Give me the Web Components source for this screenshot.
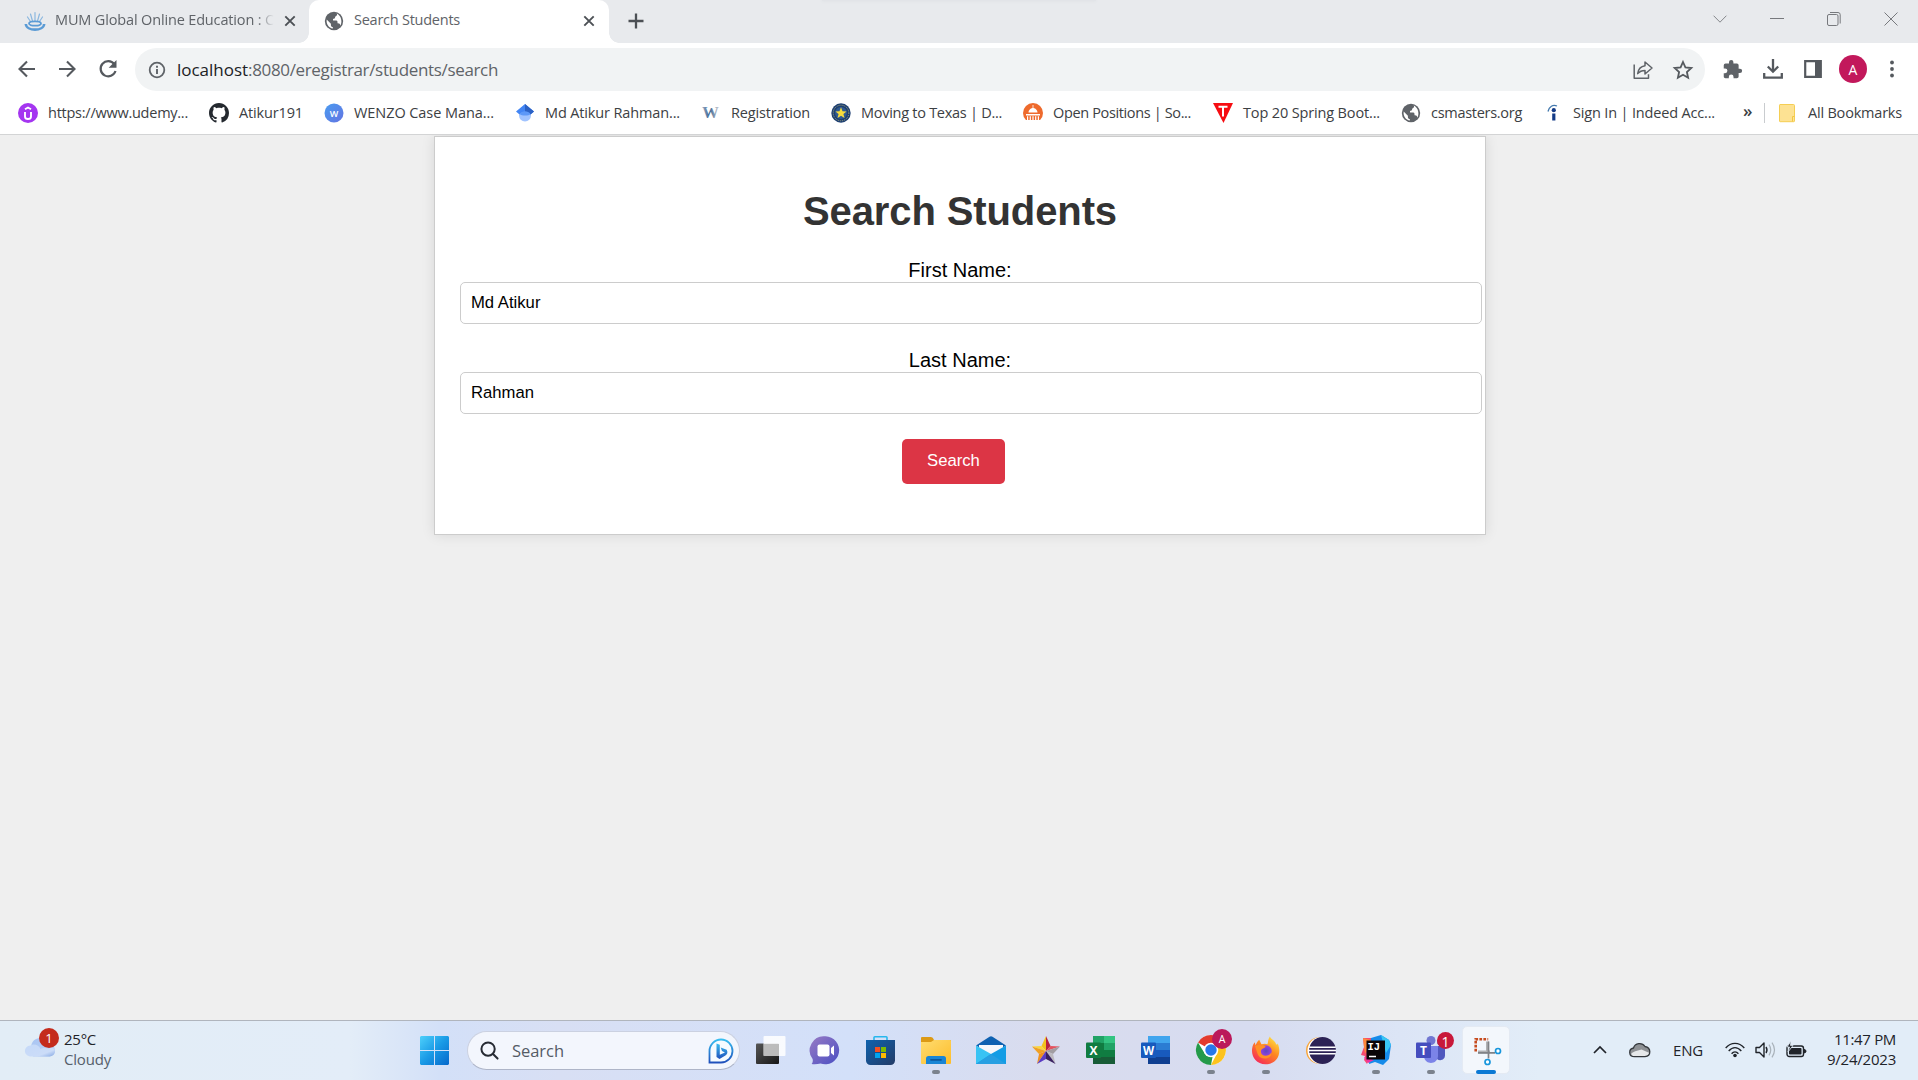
<!DOCTYPE html>
<html lang="en">
<head>
<meta charset="utf-8">
<title>Search Students</title>
<style>
html, body { margin: 0; height: 100%; overflow: hidden; }
body { font-family: "Open Sans", "Noto Sans", sans-serif; background: #efefef; }
</style>
</head>
<body>
<desktop-screen></desktop-screen>
<script>
const ICONS = {
  fountain: ['22 22', `<g fill="none" stroke="#8ab7df" stroke-width="1.2" stroke-linecap="round"><path d="M11 11V2.500M8.500 11 6.500 4M13.500 11l2-7M6.500 11.500 3.500 7M15.500 11.500l3-4.500"/></g><g fill="none" stroke="#5b9bd5"><ellipse cx="11" cy="13.500" rx="6" ry="2.200" stroke-width="1.800"/><path d="M1.800 14c.6 7.500 17.800 7.500 18.400 0" stroke-width="2.600"/></g>`],
  close: ['12 12', `<path d="M1.300 1.300l9.400 9.400m0-9.400-9.400 9.400" stroke="#4c5055" stroke-width="1.900"/>`],
  plus: ['16 16', `<path d="M8 .5v15M.5 8h15" stroke="#4c5055" stroke-width="2.300"/>`],
  globe: ['20 20', `<circle cx="10" cy="10" r="9.200" fill="#5f6368"/><path d="M12.500 2.300c1 .7.700 2.200-.4 2.700-1 .5-1.200 1-1 1.800.1.900-1.500.7-2 1.300-.4.600.3 1.100-.2 1.500h3.200c1.700.1 1.400 1.600 1.400 2.600 2.500-.1 2.800 1.400 2.700 2.600 2.200-2.700 1.700-10-3.700-12.500zM2.700 8.500l4.200 4.200v1.500c0 1.100.8 1.800 1.900 1.800v1.600C5 17 1.900 13 2.700 8.500z" fill="#fff"/>`],
  back: ['18 18', `<path d="M17 9H2M9 1.500 1.500 9 9 16.500" fill="none" stroke="#55595e" stroke-width="2.100"/>`],
  forward: ['18 18', `<path d="M1 9h15M9 1.500 16.500 9 9 16.500" fill="none" stroke="#55595e" stroke-width="2.100"/>`],
  reload: ['20 20', `<path d="M16.300 5.100A7.600 7.600 0 1 0 17.500 12" fill="none" stroke="#55595e" stroke-width="2.200"/><path d="M18.500 1v7.800h-7.800z" fill="#55595e"/>`],
  info: ['18 18', `<circle cx="9" cy="9" r="7.300" fill="none" stroke="#5f6368" stroke-width="1.800"/><path d="M9 8v5M9 4.800v2" stroke="#5f6368" stroke-width="1.900"/>`],
  share: ['20 20', `<g fill="none" stroke="#5f6368" stroke-width="1.500" stroke-linejoin="round"><path d="M1.200 4.500v13.700h14.300v-4"/><path d="M12 2l7 6-7 6v-3.600c-3.500 0-5.500 1-7.300 3.200.6-4.500 3-7.200 7.300-7.800z"/></g>`],
  star: ['20 20', `<path d="M10 2l2.400 5.400 5.900.6-4.400 4 1.200 5.800-5.100-3-5.100 3L6.100 12 1.700 8l5.900-.6z" fill="none" stroke="#55595e" stroke-width="1.800" stroke-linejoin="miter"/>`],
  puzzle: ['24 24', `<path d="M20.500 11H19V7a2 2 0 0 0-2-2h-4V3.500a2.500 2.500 0 0 0-5 0V5H4a2 2 0 0 0-2 2v3.800h1.500a2.700 2.700 0 0 1 0 5.400H2V20c0 1.100.9 2 2 2h3.800v-1.500a2.700 2.700 0 0 1 5.400 0V22H17a2 2 0 0 0 2-2v-4h1.500a2.500 2.500 0 0 0 0-5z" fill="#5f6368"/>`],
  download: ['20 20', `<path d="M10 0v12M4.800 7.500 10 12.700l5.200-5.200M1.200 14v4.600h17.600V14" fill="none" stroke="#55595e" stroke-width="2.300"/>`],
  panel: ['18 18', `<path d="M1.200 1.200h15.600v15.600H1.200z" fill="#fff" stroke="#55595e" stroke-width="2.200"/><path d="M11 1h6v16h-6z" fill="#55595e"/>`],
  dots: ['6 20', `<g fill="#55595e"><circle cx="3" cy="3.500" r="1.900"/><circle cx="3" cy="10" r="1.900"/><circle cx="3" cy="16.500" r="1.900"/></g>`],
  wchev: ['14 8', `<path d="M.6.700 7 7.200 13.400.7" fill="none" stroke="#85878b"/>`],
  wmin: ['14 2', `<path d="M0 .5h14" stroke="#77797d"/>`],
  wmax: ['14 14', `<g fill="none" stroke="#77797d"><rect x=".5" y="2.500" width="10.500" height="11" rx="1.500"/><path d="M3 .5h8a2.200 2.200 0 0 1 2.200 2.200v8.800"/></g>`],
  wclose: ['14 14', `<path d="M.5.500l13 13m0-13-13 13" stroke="#77797d"/>`],
  udemy: ['20 20', `<circle cx="10" cy="10" r="10" fill="#a435f0"/><path d="M7 9v4.500c0 3.400 6 3.400 6 0V9M7 6.300 10 4.500l3 1.800" fill="none" stroke="#fff" stroke-width="1.900"/>`],
  github: ['16 16', `<path fill="#24292f" d="M8 0C3.580 0 0 3.580 0 8c0 3.540 2.290 6.530 5.470 7.590.4.070.55-.17.55-.38 0-.19-.01-.82-.01-1.490-2.010.37-2.530-.49-2.690-.94-.09-.23-.48-.94-.82-1.130-.28-.15-.68-.52-.01-.53.630-.01 1.080.58 1.230.82.720 1.210 1.870.87 2.330.66.070-.52.280-.87.510-1.070-1.780-.2-3.640-.89-3.640-3.950 0-.87.310-1.590.82-2.150-.08-.2-.36-1.020.08-2.120 0 0 .67-.21 2.200.82.640-.18 1.320-.27 2-.27s1.360.09 2 .27c1.530-1.040 2.200-.82 2.200-.82.440 1.100.16 1.920.08 2.120.51.560.82 1.270.82 2.150 0 3.070-1.870 3.750-3.650 3.950.290.25.540.73.540 1.480 0 1.070-.01 1.930-.01 2.200 0 .21.150.46.550.38A8.010 8.010 0 0 0 16 8c0-4.420-3.580-8-8-8z"/>`],
  wenzo: ['20 20', `<defs><linearGradient id="g" y2="1"><stop stop-color="#4a9cf0"/><stop offset="1" stop-color="#6374e2"/></linearGradient></defs><circle cx="10" cy="10" r="9.500" fill="url(#g)"/><text x="10" y="13.500" font-family="Open Sans" font-size="9" font-weight="600" fill="#fff" text-anchor="middle">W</text>`],
  scholar: ['20 20', `<circle cx="10" cy="12.500" r="6" fill="#a0c3ff"/><path d="M10 1 1 8.500l3.500 3C6 8 14 8 15.500 11.500l3.500-3z" fill="#4285f4"/><path d="M10 1v7.900c2.500 0 4.800 1 5.500 2.600l3.500-3z" fill="#2b61c4"/><path d="M4.700 11c2-3.700 8.600-3.700 10.600 0-1 2-9 2-10.600 0z" fill="#5c98f8"/>`],
  wreg: ['20 20', `<defs><linearGradient id="g"><stop stop-color="#9aabc2"/><stop offset=".45" stop-color="#3d6592"/><stop offset="1" stop-color="#c8ced4"/></linearGradient></defs><text x="9.500" y="15" font-family="Liberation Serif" font-size="16" font-weight="700" fill="url(#g)" text-anchor="middle" textLength="17" lengthAdjust="spacingAndGlyphs">W</text>`],
  texas: ['20 20', `<circle cx="10" cy="10" r="9.700" fill="#1d3f72"/><circle cx="10" cy="10" r="7.800" fill="none" stroke="#a7aa7b" stroke-width="1" stroke-dasharray="1 1"/><circle cx="10" cy="10" r="6" fill="#315b91"/><path d="M10 4.300l1.500 3.900 4.100.2-3.200 2.600 1.100 4-3.500-2.300L6.500 15l1.100-4-3.200-2.600 4.100-.2z" fill="#f7dc3c"/>`],
  capitol: ['20 20', `<circle cx="10" cy="10" r="10" fill="#ee6a2c"/><path d="M0 17h20v3H0z" fill="#fff"/><path d="M9.600 2h.8v3C13 5.400 14.500 7.500 14.500 9.500h-9C5.500 7.500 7 5.400 9.600 5zM3 11h14v1.500H3zM4 13.300h1.200V17H4zm2.700 0h1.200V17H6.700zm2.700 0h1.200V17H9.400zm2.700 0h1.200V17h-1.200zm2.700 0H16V17h-1.200z" fill="#fff"/>`],
  tri: ['20 20', `<path d="M0 0h20L10.500 20z" fill="#f60d12"/><path d="M5.500 3.700h9M10 4v9.500" stroke="#fff" stroke-width="2"/>`],
  indeed: ['20 20', `<circle cx="10.800" cy="7.200" r="2.100" fill="#143b87"/><path d="M9.200 10.500h3.200v7H9.200z" fill="#143b87"/><path d="M5 8.500C6 3.500 10 1.200 14 3" fill="none" stroke="#4278ad" stroke-width="1.300"/>`],
  folder: ['16 18', `<path d="M1 .5h13.500a1 1 0 0 1 1 1V17a.7.700 0 0 1-.7.700H1.200A.7.700 0 0 1 .5 17V1.200A.7.700 0 0 1 1 .5z" fill="#fde293" stroke="#f5ce53"/><path d="M15.500 12.500h-2v5" fill="none" stroke="#f2c744"/>`],
  cloudw: ['30 20', `<defs><linearGradient id="g" y2="1"><stop stop-color="#a8c4f2"/><stop offset="1" stop-color="#bfd3f5"/></linearGradient><linearGradient id="h" y2="1"><stop stop-color="#c5d9f8"/><stop offset=".7" stop-color="#cbdcf8"/><stop offset="1" stop-color="#86a9e3"/></linearGradient></defs><path d="M6 11C6 4 11 .5 16 1c5 .5 7 3 7.500 6.500C28 7.500 30 10 30 13c0 4-3 6.500-7 6.500H8z" fill="url(#g)"/><path d="M6.500 19.500C-2 19.500-2 9 5.500 8.500 9 6.500 14 8 15.500 12c2-1 5.500-1.500 8-.5 3-2 6.500 0 6.500 2.500 0 4-3 5.500-6.500 5.500z" fill="url(#h)"/>`],
  start: ['29 29', `<defs><linearGradient id="g" gradientUnits="userSpaceOnUse" x2="29" y2="29"><stop stop-color="#4ed0fb"/><stop offset=".5" stop-color="#199ae6"/><stop offset="1" stop-color="#0668cb"/></linearGradient></defs><path d="M1 0h13v14H0V1zM15 0h13l1 1v13H15zM0 15h14v14H1l-1-1zM15 15h14v13l-1 1H15z" fill="url(#g)"/>`],
  mag: ['20 20', `<g fill="none" stroke="#262a33" stroke-width="2.100" stroke-linecap="round"><circle cx="8.500" cy="8.500" r="7"/><path d="m13.700 13.700 4.800 4.800"/></g>`],
  bing: ['26 26', `<defs><linearGradient id="g" x2="0" y2="1"><stop stop-color="#38bdf0"/><stop offset="1" stop-color="#2051bc"/></linearGradient></defs><path d="M1.500 24.500V13A11.500 11.500 0 1 1 13 24.500z" fill="#f5fbff" stroke="url(#g)" stroke-width="1.800"/><path d="M8.500 5.500l3.300 1.300v10L17 14.500l-3-1.500-1.300-3.500 6 2.300c1.500 2.700.5 4.700-1.300 5.800L11.500 21l-3-2z" fill="url(#g)"/>`],
  taskview: ['30 28', `<defs><linearGradient id="g" y2="1"><stop stop-color="#555"/><stop offset="1" stop-color="#171717"/></linearGradient></defs><rect y="7.500" width="23" height="20.500" rx="1" fill="url(#g)"/><rect x="7.500" width="22" height="20" rx="1" fill="#fff" fill-opacity=".85"/><path d="M7.500 8H23v12H7.500z" fill="#a8a8a8" fill-opacity=".65"/>`],
  chat: ['29 29', `<defs><linearGradient id="g" y2="1"><stop stop-color="#987bc4"/><stop offset="1" stop-color="#4b4fc3"/></linearGradient></defs><path d="M14.500.3a14 14 0 1 1-5 27.200C6.500 28.300 3 28.500.6 28c1.200-1.200 1.500-3.500 1-5A14.200 14.200 0 0 1 14.500.3z" fill="url(#g)"/><rect x="6.500" y="8.500" width="12" height="12" rx="2" fill="#fff"/><path d="M20 12l3-2.500v10L20 17z" fill="#fff"/>`],
  store: ['29 29', `<defs><linearGradient id="g" y2="1"><stop stop-color="#0e62ae"/><stop offset="1" stop-color="#243b67"/></linearGradient></defs><path d="M8 5.500v-4q0-.8.800-.8h11.400q.8 0 .8.800v4" fill="none" stroke="#27b7ed" stroke-width="1.600"/><path d="M0 4h29v20.500a4.500 4.500 0 0 1-4.500 4.500h-20A4.500 4.500 0 0 1 0 24.500z" fill="url(#g)"/><path d="M9 11h5v5H9z" fill="#f25022"/><path d="M15 11h5v5h-5z" fill="#7fba00"/><path d="M9 17h5v5H9z" fill="#00a4ef"/><path d="M15 17h5v5h-5z" fill="#ffb900"/>`],
  explorer: ['30 27', `<defs><linearGradient id="g" y2="1"><stop stop-color="#ffdc70"/><stop offset="1" stop-color="#fdbd2b"/></linearGradient></defs><path d="M0 1q0-1 1-1h9q2 0 3 3h16q1 0 1 1v4H0z" fill="#dc9a16"/><path d="M0 5h10l3-2h16q1 0 1 1v22q0 1-1 1H1q-1 0-1-1z" fill="url(#g)"/><path d="M5 27v-5.500q0-2.500 2.500-2.500h15q2.500 0 2.500 2.500V27z" fill="#1985d5"/><path d="M10 22.800h10" stroke="#0c579c" stroke-width="1.800" stroke-linecap="round"/>`],
  mail: ['30 28', `<path d="M0 9.500 13.500.7q1.500-1 3 0L30 9.500l-15 9z" fill="#0e61b1"/><path d="M3 9h24v8l-12 6-12-6z" fill="#f6f8fb"/><path d="M0 9.500 15 18v10H0z" fill="#38c3f4"/><path d="M30 9.500V28H0l15-10z" fill="#149de5"/><path d="M0 28 15 18l15 10z" fill="#279fe2"/>`],
  clips: ['28 28', `<path d="M14 0 9.500 10 14 15z" fill="#f3c21c"/><path d="M14 0l4.500 10L14 15z" fill="#b8223f"/><path d="M0 10.500 9.500 10 14 15z" fill="#fcd53a"/><path d="M0 10.500 14 15l-7 3z" fill="#f0a023"/><path d="M28 10.500 18.500 10 14 15z" fill="#e4525e"/><path d="M28 10.500 14 15l7 3z" fill="#a19da2"/><path d="M5 28 7 18l7-3z" fill="#f0901d"/><path d="M5 28 14 15v8z" fill="#5b3cc4"/><path d="M14 15l7 3 2.500 10z" fill="#bdbabf"/><path d="M14 15v8l9.500 5z" fill="#3a2160"/>`],
  excel: ['29 28', `<path d="M7 0h22v28H7z" fill="#21a366"/><path d="M18 0h11v7H18z" fill="#33c481"/><path d="M7 14h22v7H7z" fill="#107c41"/><path d="M7 7h11v7H7z" fill="#107c41"/><path d="M7 21h22v7H7z" fill="#185c37"/><rect y="6.500" width="15" height="15.500" rx="1" fill="#107c41"/><text x="7.500" y="18.700" font-family="Open Sans" font-size="12" font-weight="700" fill="#fff" text-anchor="middle">X</text>`],
  word: ['29 28', `<path d="M7 0h22v7H7z" fill="#41a5ee"/><path d="M7 7h22v7H7z" fill="#2b7cd3"/><path d="M7 14h22v7H7z" fill="#185abd"/><path d="M7 21h22v7H7z" fill="#103f91"/><rect y="6.500" width="15" height="15.500" rx="1" fill="#185abd"/><text x="7.500" y="18.700" font-family="Open Sans" font-size="11.500" font-weight="700" fill="#fff" text-anchor="middle">W</text>`],
  chrome: ['30 30', `<circle cx="15" cy="15" r="15" fill="#fff"/><path d="M15 15 2 7.500a15 15 0 0 1 26 0z" fill="#e33b2e"/><path d="M15 8h13.200A15 15 0 0 1 15 30l6-11.500z" fill="#fcc31e"/><path d="M2 7.500 9 19l6 3 1.500 0L15 30A15 15 0 0 1 2 7.500z" fill="#249a4a"/><circle cx="15" cy="15" r="7.300" fill="#fff"/><circle cx="15" cy="15" r="5.700" fill="#2878ea"/>`],
  firefox: ['30 30', `<defs><linearGradient id="g" x1=".9" x2=".2" y2="1"><stop stop-color="#fff14a"/><stop offset=".45" stop-color="#ff8a20"/><stop offset="1" stop-color="#f5245d"/></linearGradient><radialGradient id="h"><stop stop-color="#5947c2"/><stop offset="1" stop-color="#9b42df"/></radialGradient></defs><path d="M19.500.5c1 3 5 4 6.500 8 1 1 1.500 0 1.500-1C32 17 28 29 15 29.300 5 29.300 0 21 1.200 13c.4-3 1.300-5 2.800-6.500l.5 3C6 7.500 6.500 5.500 8.500 4l2.300 4.500c3-1 5-.5 6.200 0 1-3 .5-5 2.500-8z" fill="url(#g)"/><circle cx="15.500" cy="15.500" r="6" fill="url(#h)"/><path d="M4 10c5-1.500 8 0 11 .5 0 2-3.500 2-4.500 4C8.500 21 18 22.500 21 17c1 7-11 9-14 2z" fill="#ff9025"/>`],
  eclipse: ['30 27', `<ellipse cx="13" cy="13.500" rx="13" ry="13.200" fill="#f7a53a"/><ellipse cx="15" cy="13.500" rx="13.500" ry="13.500" fill="#fff"/><circle cx="16.500" cy="13.500" r="13.400" fill="#2c2255"/><path d="M3.200 10.300h26.600M3 13.500h27M3.200 16.700h26.600" stroke="#fff" stroke-width="1.500"/>`],
  idea: ['30 30', `<path d="M2 3l12 0-3 15-5 11-3-4 1-4-4-1 3-8z" fill="#f74a72"/><path d="M2 3l8 2-6 14-1-7z" fill="#fd8a3b"/><path d="M10 3l10-3 8 5 2 5-2 14-6 6-8-3-6 2z" fill="#168bea"/><path d="M20 0l8 5 2 5-5 8z" fill="#39c6f3"/><path d="M3 22l10 3-6 3z" fill="#ee30a0"/><path d="M5.500 5.500h18.500v19H5.500z" fill="#090608"/><text x="6.500" y="14.800" font-family="Liberation Mono" font-size="10.500" font-weight="700" fill="#fff">IJ</text><path d="M8 21.500h7" stroke="#fff" stroke-width="1.500"/>`],
  teams: ['30 28', `<circle cx="15" cy="4.500" r="4.500" fill="#7177d2"/><circle cx="24.500" cy="6" r="3.300" fill="#5058be"/><path d="M19 10h10v9c0 5-5 6.500-8 4z" fill="#5058be"/><path d="M8 10h14v10c0 8-12 10-14 1z" fill="#7b83e8"/><rect y="6.500" width="15" height="15.500" rx="1" fill="#454dbe"/><text x="7.500" y="18.500" font-family="Open Sans" font-size="12" font-weight="700" fill="#fff" text-anchor="middle">T</text>`],
  snip: ['30 30', `<path d="M4.700 16.500V4.200h12.500" fill="none" stroke="#c64b1e" stroke-width="2.600" stroke-dasharray="2.700 1.300"/><path d="M16.500 6.500v12M7 17h12" fill="none" stroke="#b0b1b3" stroke-width="3"/><path d="M17.500 6.500v17M7 17.800h17" fill="none" stroke="#808286" stroke-width="1.700"/><circle cx="27" cy="16" r="2.500" fill="#fff" stroke="#1896dc" stroke-width="1.700"/><circle cx="16.500" cy="27" r="2.500" fill="#fff" stroke="#1896dc" stroke-width="1.700"/>`],
  up: ['14 9', `<path d="M1 8l6-6 6 6" fill="none" stroke="#20242a" stroke-width="1.700"/>`],
  cloudt: ['22 16', `<path d="M5.500 14.500C-.5 14.500-.5 7 4.500 6 6 1 13 0 16 4.500c6 1 6.500 9.500 0 10z" fill="#8e9195"/><path d="M4.500 14.300C0 12 2 10 12.500 7.500l8 3.500c0 2-2 3.500-4 3.500z" fill="#e6e8ea"/><path d="M5.500 14.700C-.7 14.700-.7 7 4.500 6 6 1 13 0 16 4.500c6.300 1 6.500 9.800 0 10.200z" fill="none" stroke="#33373c" stroke-width="1.300"/>`],
  wifi: ['20 16', `<g fill="none" stroke="#20242a" stroke-width="1.400"><path d="M.7 6C6-.2 14-.2 19.300 6M3.700 9c4-4.500 8.600-4.500 12.600 0M6.600 11.700c2-2.400 4.800-2.400 6.800 0"/></g><circle cx="10" cy="13.500" r="1.800" fill="#20242a"/>`],
  sound: ['21 18', `<path d="M1 6.500h3.500L9 2v14l-4.500-4.500H1z" fill="none" stroke="#20242a" stroke-width="1.400" stroke-linejoin="round"/><path d="M11 6q2 3 0 6" fill="none" stroke="#20242a" stroke-width="1.400"/><path d="M14 3.700q3.500 5.300 0 10.600M17 1.700q5 7.300 0 14.600" fill="none" stroke="#a9b2ba" stroke-width="1.200"/>`],
  battery: ['21 17', `<rect x="1" y="5" width="16.500" height="10.500" rx="2.200" fill="none" stroke="#20242a" stroke-width="1.400"/><rect x="3" y="7" width="12.500" height="6.500" rx=".8" fill="#20242a"/><path d="M18 8.500q2 0 2 1.700t-2 1.700z" fill="#20242a" stroke="#20242a"/><path d="M5 0 1 6h2.500L2 11l5-6.500H4.500z" fill="#20242a" stroke="#e2edf8" stroke-width=".8"/>`]
};

function define(tag, html, setup) {
  customElements.define(tag, class extends HTMLElement {
    connectedCallback() {
      if (this.shadowRoot) return;
      const root = this.attachShadow({ mode: 'open' });
      root.innerHTML = html;
      if (setup) setup.call(this, root);
    }
  });
}

define('desktop-screen', `<style>
:host { display: flex; flex-direction: column; width: 1918px; height: 1080px; overflow: hidden; }
page-view { flex: 1; min-height: 0; }
</style><tab-strip></tab-strip><tool-bar></tool-bar><bookmark-bar></bookmark-bar><page-view></page-view><task-bar></task-bar>`);

define('tab-strip', `<style>
:host { display: flex; height: 43px; background: #e8eaed; color: #5f6368; font-size: 14.5px; position: relative; align-items: stretch; }
.hint { position: absolute; left: 822px; top: 0; width: 274px; height: 1px; background: #e2e4e8; box-shadow: 0 0 3px #d5d7db; }
.tab { display: flex; align-items: center; box-sizing: border-box; height: 43px; padding-bottom: 1px; }
.tab fit-text { line-height: 20px; padding-bottom: 2px; }
.one { width: 309px; padding-left: 24px; }
.one .clip { width: 219px; margin-left: 9px; overflow: hidden; -webkit-mask: linear-gradient(90deg,#000 92%,transparent); }
.one .x, .two .x { margin-left: auto; }
.one .x { margin-right: 13px; }
.two { width: 300px; background: #fff; border-radius: 10px 10px 0 0; padding-left: 15px; position: relative; }
.two fit-text { margin-left: 10px; }
.two .x { margin-right: 14px; }
.two::before, .two::after { content: ""; position: absolute; bottom: 0; width: 10px; height: 10px; }
.two::before { left: -10px; background: radial-gradient(circle at 0 0, transparent 9.500px, #fff 10px); }
.two::after { right: -10px; background: radial-gradient(circle at 100% 0, transparent 9.500px, #fff 10px); }
.plus { margin: 13px 0 0 19px; }
.win { margin-left: auto; display: flex; align-items: center; height: 37px; padding-right: 20px; gap: 43px; }
</style><div class="hint"></div>
<div class="tab one"><app-icon name="fountain" s="22"></app-icon><div class="clip"><fit-text w="219">MUM Global Online Education : C</fit-text></div><app-icon class="x" name="close" s="12"></app-icon></div>
<div class="tab two"><app-icon name="globe" s="20"></app-icon><fit-text w="106">Search Students</fit-text><app-icon class="x" name="close" s="12"></app-icon></div>
<app-icon class="plus" name="plus" s="16"></app-icon>
<div class="win"><app-icon name="wchev" s="14"></app-icon><app-icon name="wmin" s="14"></app-icon><app-icon name="wmax" s="14"></app-icon><app-icon name="wclose" s="14"></app-icon></div>`);

define('tool-bar', `<style>
:host { display: flex; align-items: center; height: 53px; background: #fff; box-sizing: border-box; }
:host > app-icon, .ext { padding-bottom: 1px; }
.b { margin-left: 18px; } .f { margin-left: 22px; } .r { margin-left: 22px; }
.omni { margin-left: 17px; width: 1570px; height: 43px; border-radius: 22px; background: #f1f3f4; display: flex; align-items: center; box-sizing: border-box; padding: 0 12px 0 13px; font-size: 17px; color: #5f6368; }
.host { color: #202124; margin-left: 11px; }
.sh { margin: 0 20px 0 auto; }
.ext { display: flex; align-items: center; margin-left: 17px; }
.av { width: 28px; height: 28px; border-radius: 50%; background: #c2185b; color: #fff; font-size: 14px; display: grid; place-items: center; margin: 0 25px 0 17px; }
</style><app-icon class="b" name="back" s="18"></app-icon><app-icon class="f" name="forward" s="18"></app-icon><app-icon class="r" name="reload" s="20"></app-icon>
<div class="omni"><app-icon name="info" s="18"></app-icon><fit-text class="host" w="71">localhost</fit-text><fit-text w="250">:8080/eregistrar/students/search</fit-text><app-icon class="sh" name="share" s="20"></app-icon><app-icon name="star" s="20"></app-icon></div>
<div class="ext"><app-icon name="puzzle" s="21"></app-icon><app-icon name="download" s="20" style="margin-left:20px"></app-icon><app-icon name="panel" s="18" style="margin-left:21px"></app-icon><div class="av">A</div><app-icon name="dots" s="6" style="margin-left:-3px"></app-icon></div>`);

define('bookmark-item', `<style>:host { display: flex; align-items: center; box-sizing: border-box; flex: none; }
fit-text { margin-left: 10px; }</style><app-icon s="20"></app-icon><fit-text></fit-text>`, function (root) {
  this.style.width = this.getAttribute('pitch') + 'px';
  root.querySelector('app-icon').setAttribute('name', this.getAttribute('icon'));
  const t = root.querySelector('fit-text');
  t.setAttribute('w', this.getAttribute('w'));
  t.textContent = this.getAttribute('label');
});

define('bookmark-bar', `<style>
:host { display: flex; align-items: center; height: 39px; padding: 0 0 0 18px; box-sizing: border-box; background: #fff; border-bottom: 1px solid #d3d4d5; font-size: 14.500px; color: #3c4043; padding-bottom: 5px; }
.more { font-size: 17px; line-height: 20px; margin: -4px 0 0 2px; width: 21px; font-weight: 600; }
.sep { width: 1px; height: 20px; background: #c9cccf; margin-right: 14px; }
.all { margin-left: 13px; }
</style>` + [
  ['udemy', 'https://www.udemy...', 140, 191], ['github', 'Atikur191', 64, 115], ['wenzo', 'WENZO Case Mana...', 140, 191],
  ['scholar', 'Md Atikur Rahman...', 135, 186], ['wreg', 'Registration', 79, 130], ['texas', 'Moving to Texas | D...', 141, 192],
  ['capitol', 'Open Positions | So...', 138, 190], ['tri', 'Top 20 Spring Boot...', 137, 188], ['globe', 'csmasters.org', 91, 142],
  ['indeed', 'Sign In | Indeed Acc...', 142, 198]
].map(([i, l, w, p]) => `<bookmark-item icon="${i}" label="${l}" w="${w}" pitch="${p}"></bookmark-item>`).join('') +
`<div class="more">»</div><div class="sep"></div><app-icon name="folder" s="16"></app-icon><fit-text class="all" w="94">All Bookmarks</fit-text>`);

define('page-view', `<style>
:host { display: block; background: #efefef; overflow: hidden; font-family: "Liberation Sans", Arial, sans-serif; }
search-card { margin: 1px 0 0 434px; }
</style><search-card></search-card>`);

define('search-card', `<style>
:host { display: flex; flex-direction: column; align-items: center; box-sizing: border-box; width: 1052px; height: 399px; background: #fff; border: 1px solid #ccc; box-shadow: 0 0 12.500px rgba(0,0,0,.1); padding: 0 25px; color: #000; }
h1 { margin: 51px 0 0; font-size: 40px; line-height: 46px; height: 46px; color: #333; }
form-field { align-self: stretch; }
.f1 { margin-top: 25px; } .f2 { margin-top: 25px; }
button { margin: 25px 14px 0 0; width: 103px; height: 45px; padding: 0 0 2px 1px; border: 0; border-radius: 5px; background: #dc3545; color: #fff; font: 16.667px "Liberation Sans", Arial, sans-serif; }
</style><h1><fit-text w="314">Search Students</fit-text></h1><form-field class="f1" label="First Name:" value="Md Atikur"></form-field><form-field class="f2" label="Last Name:" value="Rahman"></form-field><button>Search</button>`);

define('form-field', `<style>
:host { display: flex; flex-direction: column; height: 65px; }
label { text-align: center; font-size: 20px; line-height: 23px; height: 23px; }
.in { width: 1022px; height: 42px; box-sizing: border-box; border: 1px solid #ccc; border-radius: 5px; background: #fff; font-size: 16.667px; line-height: 39.500px; padding-left: 10px; white-space: nowrap; }
</style><label></label><div class="in"></div>`, function (root) {
  root.querySelector('label').textContent = this.getAttribute('label');
  root.querySelector('.in').textContent = this.getAttribute('value');
});

define('task-app', `<style>
:host { display: grid; place-items: center; position: relative; width: 55px; height: 48px; flex: none; }
.tile { display: none; position: absolute; inset: 0 3px 0 4px; background: #f3f7fc; border: 1px solid #e4eaf3; border-radius: 5px; box-sizing: border-box; }
:host([active]) .tile { display: block; }
app-icon { position: relative; }
.ind { position: absolute; bottom: 0; left: 50%; width: 8px; height: 4px; margin-left: -4px; border-radius: 2px; background: #7b828d; display: none; }
:host([open]) .ind { display: block; }
:host([active]) .ind { display: block; width: 20px; margin-left: -10px; background: #0a78d4; }
.badge { position: absolute; border-radius: 50%; color: #fff; display: grid; place-items: center; }
.badge.A { width: 20px; height: 20px; left: 29px; top: 3px; background: #bb195a; font-size: 10.500px; }
.badge.n { width: 17px; height: 17px; left: 34px; top: 6px; background: #c8183a; font-size: 14px; }
</style><div class="tile"></div><app-icon></app-icon><i class="ind"></i>`, function (root) {
  const i = root.querySelector('app-icon');
  i.setAttribute('name', this.getAttribute('icon'));
  i.setAttribute('s', this.getAttribute('s') || 29);
  const b = this.getAttribute('badge');
  if (b) root.innerHTML += `<span class="badge ${b === 'A' ? 'A' : 'n'}">${b}</span>`;
});

define('task-bar', `<style>
:host { display: flex; align-items: flex-start; box-sizing: border-box; height: 60px; border-top: 1px solid #b0b5bd; color: #1f2329; font-size: 15px;
 background: linear-gradient(90deg,#e2edf6 0,#e3edf8 350px,#d3e0f8 440px,#d8dff4 560px,#d3e0f9 850px,#d9dcee 1040px,#d7dcf0 1250px,#dce5f6 1400px,#e2edf8 1540px,#e2edf8 100%); }
.weather { display: flex; width: 380px; padding-left: 25px; box-sizing: border-box; position: relative; height: 59px; flex: none; }
.weather app-icon { margin-top: 16px; }
.wb { position: absolute; left: 39px; top: 7px; width: 20px; height: 20px; border-radius: 50%; background: #c42b1c; color: #fff; font-size: 13px; display: grid; place-items: center; }
.two { display: flex; flex-direction: column; line-height: 20px; margin: 8px 0 0 9px; }
.two span, .two fit-text { height: 20px; }
.two .c { color: #56606b; }
.start { margin: 15px 0 0 40px; }
.pill { margin: 10px 0 0 18px; width: 273px; height: 39px; box-sizing: border-box; border-radius: 20px; background: #f3f6fd; border: 1px solid #cbd1e1; border-bottom-color: #aeb5c8; display: flex; align-items: center; padding: 0 5px 0 12px; font-size: 16.500px; color: #555b66; }
.pill fit-text { margin-left: 13px; } .pill .bi { margin-left: auto; }
.apps { display: flex; margin: 5px 0 0 3px; }
.tray { display: flex; align-items: center; height: 59px; margin-left: auto; padding-right: 22px; }
.tray app-icon, .tray > fit-text { position: relative; top: -1px; }
.clock { display: flex; flex-direction: column; align-items: flex-end; line-height: 20px; margin: 0 0 4px 18px; width: 71px; }
.clock fit-text { height: 20px; }
</style>
<div class="weather"><app-icon name="cloudw" s="30"></app-icon><div class="wb">1</div><div class="two"><fit-text w="32">25°C</fit-text><fit-text class="c" w="47">Cloudy</fit-text></div></div>
<app-icon class="start" name="start" s="29"></app-icon>
<div class="pill"><app-icon name="mag" s="19"></app-icon><fit-text w="52">Search</fit-text><app-icon class="bi" name="bing" s="26"></app-icon></div>
<div class="apps"><task-app icon="taskview" s="30"></task-app><task-app icon="chat"></task-app><task-app icon="store"></task-app><task-app icon="explorer" s="30" open></task-app><task-app icon="mail" s="30"></task-app><task-app icon="clips" s="28"></task-app><task-app icon="excel"></task-app><task-app icon="word"></task-app><task-app icon="chrome" s="30" badge="A" open></task-app><task-app icon="firefox" s="29" open></task-app><task-app icon="eclipse" s="30"></task-app><task-app icon="idea" s="30" open></task-app><task-app icon="teams" s="30" badge="1" open></task-app><task-app icon="snip" s="30" active></task-app></div>
<div class="tray"><app-icon name="up" s="14"></app-icon><app-icon name="cloudt" s="22" style="margin-left:22px"></app-icon><fit-text w="30" style="margin-left:22px">ENG</fit-text><app-icon name="wifi" s="20" style="margin-left:22px"></app-icon><app-icon name="sound" s="21" style="margin-left:10px"></app-icon><app-icon name="battery" s="21" style="margin-left:10px"></app-icon>
<div class="clock"><fit-text w="62">11:47 PM</fit-text><fit-text w="69">9/24/2023</fit-text></div></div>`);

define('app-icon', `<style>:host { display: block; flex: none; line-height: 0; } svg { display: block; overflow: visible; }</style>`, function (root) {
  const [box, body] = ICONS[this.getAttribute('name')];
  const [w, h] = box.split(' ').map(Number), s = +this.getAttribute('s');
  root.innerHTML += `<svg viewBox="0 0 ${box}" width="${s}" height="${s * h / w}">${body}</svg>`;
});

/* Text run whose tracking is adjusted so that it fills the width given in "w". */
define('fit-text', `<style>:host { display: block; width: max-content; white-space: nowrap; flex: none; }</style><slot></slot>`, function () {
  const n = this.textContent.length, w = +this.getAttribute('w');
  this.style.letterSpacing = '0px';
  const natural = this.getBoundingClientRect().width;
  this.style.letterSpacing = (w - natural) / n + 'px';
});
</script>
</body>
</html>
